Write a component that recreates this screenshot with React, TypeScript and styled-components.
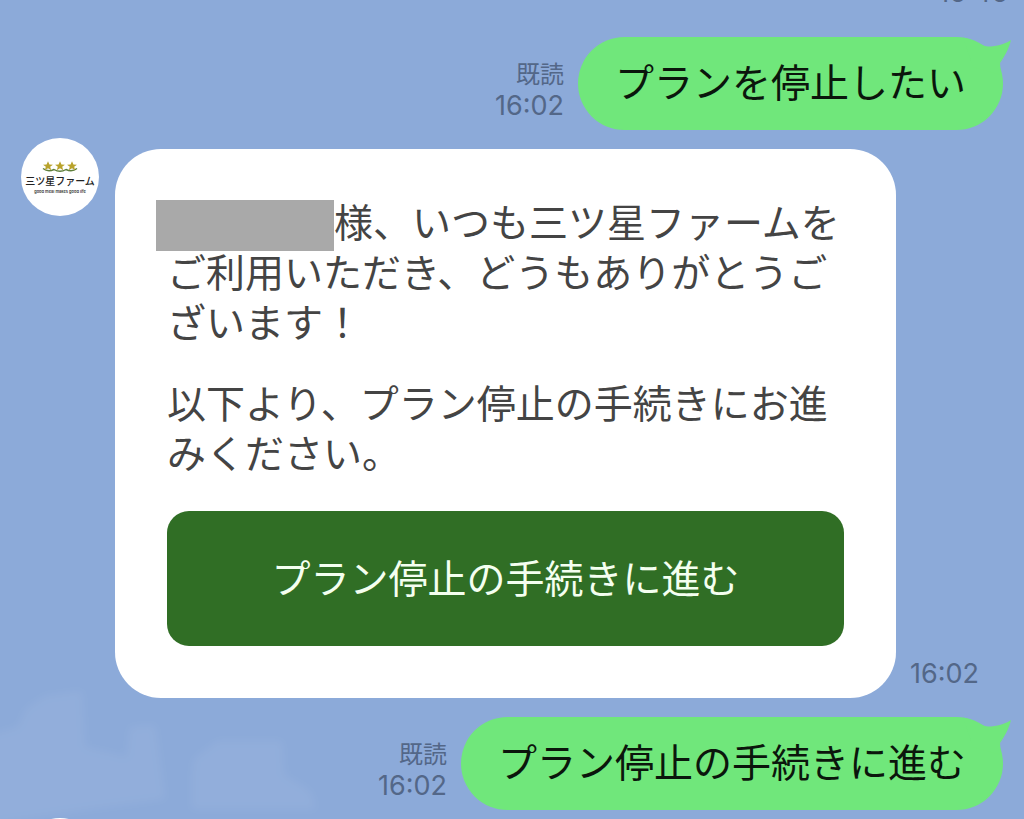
import React from "react";
import styled, { createGlobalStyle } from "styled-components";

const GlobalStyle = createGlobalStyle`
  *, *::before, *::after { box-sizing: border-box; }
  body {
    margin: 0;
    background: #8caad9;
    font-family: Inter, "Noto Sans CJK JP", sans-serif;
  }
`;

const Chat = styled.main`
  position: relative;
  display: flex;
  flex-direction: column;
  height: 100vh;
  overflow: hidden;
  background: #8caad9;
`;

const Clouds = styled.svg`
  position: absolute;
  left: 0;
  bottom: 0;
  width: 340px;
  height: 160px;
`;

const ClippedRow = styled.div`
  display: flex;
  flex: none;
  align-items: flex-end;
  justify-content: flex-end;
  height: 8px;
  padding-right: 16px;
`;

const SentRow = styled.div<{ $gap: number }>`
  position: relative;
  display: flex;
  flex: none;
  align-items: flex-end;
  justify-content: flex-end;
  gap: 14px;
  margin-top: ${(p) => p.$gap}px;
  padding-right: 21px;
`;

const ReceivedRow = styled.div`
  position: relative;
  display: flex;
  flex: none;
  align-items: flex-start;
  margin-top: 8px;
  padding: 0 45px 0 21px;
`;

const Meta = styled.div`
  display: flex;
  flex-direction: column;
  align-items: flex-end;
  padding-bottom: 9px;
  color: #536788;
`;

const Read = styled.span`
  font-size: 24px;
  line-height: 31px;
`;

const Time = styled.time`
  flex: none;
  color: #536788;
  font-size: 27px;
  line-height: 31px;
`;

const Bubble = styled.p`
  position: relative;
  margin: 0;
  padding: 21px 37px 22px;
  border-radius: 47px;
  background: #70e77b;
  color: #0b160c;
  font-size: 39px;
  line-height: 50px;
  white-space: nowrap;
`;

const Tail = styled.svg`
  position: absolute;
  top: 0;
  right: -8px;
  width: 48px;
  height: 44px;
`;

const Avatar = styled.svg`
  flex: none;
  width: 78px;
  height: 78px;
`;

const Card = styled.article`
  flex: 1;
  min-width: 0;
  margin: 11px 14px 0 16px;
  padding: 49px 52px 52px;
  border-radius: 46px;
  background: #fff;
  color: #444;
  font-size: 39px;
  line-height: 50px;
`;

const Paragraph = styled.p`
  margin: 0;

  & + & {
    margin: 31px 0 32px;
  }
`;

const Redacted = styled.span`
  display: inline-block;
  width: 178px;
  height: 51px;
  margin: 2px 0 -3px -11px;
  background: #a9a9a9;
  vertical-align: top;
`;

const ActionButton = styled.button`
  display: block;
  width: 100%;
  height: 135px;
  padding: 0;
  border: 0;
  border-radius: 22px;
  background: #306e25;
  color: #f4fff0;
  font: inherit;
  cursor: pointer;
`;

const CardTime = styled(Time)`
  align-self: flex-end;
  padding-bottom: 9px;
`;

const NextRow = styled.div`
  position: relative;
  flex: none;
  margin-top: 8px;
  padding-left: 21px;
`;

const STAR = "M0-5 1.5-1.6 5.2-1.4 2.3.8 3.4 4.4 0 2.4-3.4 4.4-2.3.8-5.2-1.4-1.5-1.6Z";

function FarmAvatar() {
  return (
    <Avatar viewBox="0 0 78 78" role="img" aria-label="三ツ星ファーム">
      <circle cx="39" cy="39" r="39" fill="#fff" />
      <path
        d="M22 30.5Q27 34.5 33 31.5Q39 35 45 31.5Q51 34.5 56 30.5"
        fill="none"
        stroke="#5f7f3c"
        strokeWidth="1.4"
      />
      <g fill="#b9a32c">
        {[27, 39, 51].map((x) => (
          <path key={x} d={STAR} transform={`translate(${x} 28) scale(.95)`} />
        ))}
      </g>
      <text x="39" y="47" textAnchor="middle" fontSize="10" fontWeight="500" fill="#222">
        三ツ星ファーム
      </text>
      <text x="39" y="55" textAnchor="middle" fontSize="4" fontWeight="600" fill="#333">
        good meal makes good life
      </text>
    </Avatar>
  );
}

function SentMessage({ text, gap }: { text: string; gap: number }) {
  return (
    <SentRow $gap={gap}>
      <Meta>
        <Read>既読</Read>
        <Time>16:02</Time>
      </Meta>
      <Bubble>
        {text}
        <Tail viewBox="0 0 48 44" aria-hidden="true">
          <path d="M0 .5C10 2 17 9 25 9.5C34 9.5 42 7 48 3C46 12 41 20 37 26L38 38L10 30Z" fill="#70e77b" />
        </Tail>
      </Bubble>
    </SentRow>
  );
}

export default function App() {
  return (
    <>
      <GlobalStyle />
      <Chat>
        <Clouds viewBox="0 0 340 160" aria-hidden="true">
          <defs>
            <filter id="cloud-edge">
              <feGaussianBlur stdDeviation="4" />
            </filter>
          </defs>
          <g fill="#fff" fillOpacity=".05" filter="url(#cloud-edge)">
            <path d="M-10 76L18 68 26 50 45 37 82 32 85 88 127 98 130 68 155 66 165 140 90 150 -10 165Z" />
            <path d="M192 118L194 100 218 82 282 82 284 116 310 132 316 150 192 150Z" />
          </g>
        </Clouds>
        <ClippedRow>
          <Time>16:46</Time>
        </ClippedRow>
        <SentMessage text="プランを停止したい" gap={29} />
        <ReceivedRow>
          <FarmAvatar />
          <Card>
            <Paragraph>
              <Redacted aria-hidden="true" />
              様、いつも三ツ星ファームをご利用いただき、どうもありがとうございます！
            </Paragraph>
            <Paragraph>以下より、プラン停止の手続きにお進みください。</Paragraph>
            <ActionButton type="button">プラン停止の手続きに進む</ActionButton>
          </Card>
          <CardTime>16:02</CardTime>
        </ReceivedRow>
        <SentMessage text="プラン停止の手続きに進む" gap={19} />
        <NextRow>
          <Avatar viewBox="0 0 78 78" aria-hidden="true">
            <circle cx="39" cy="39" r="39" fill="#fff" />
          </Avatar>
        </NextRow>
      </Chat>
    </>
  );
}
